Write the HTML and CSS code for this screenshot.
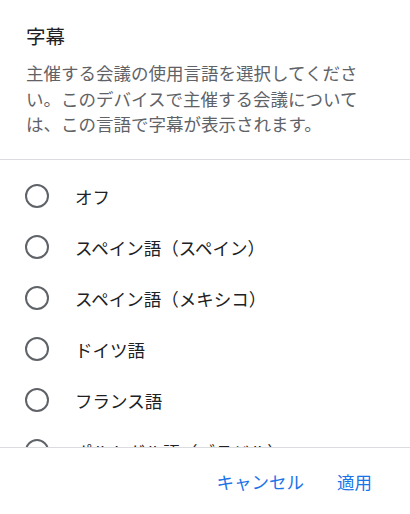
FILE: index.html
```html
<!DOCTYPE html>
<html lang="ja">
<head>
<meta charset="utf-8">
<link rel="stylesheet" href="styles.css">
</head>
<body>
<div class="dialog">
  <header class="head">
    <h1 class="title">字幕</h1>
    <p class="desc">主催する会議の使用言語を選択してください。このデバイスで主催する会議については、この言語で字幕が表示されます。</p>
  </header>
  <ul class="list">
    <li class="item"><span class="radio"></span><span class="label">オフ</span></li>
    <li class="item"><span class="radio"></span><span class="label">スペイン語（スペイン）</span></li>
    <li class="item"><span class="radio"></span><span class="label">スペイン語（メキシコ）</span></li>
    <li class="item"><span class="radio"></span><span class="label">ドイツ語</span></li>
    <li class="item"><span class="radio"></span><span class="label">フランス語</span></li>
    <li class="item"><span class="radio"></span><span class="label">ポルトガル語（ブラジル）</span></li>
  </ul>
  <footer class="foot">
    <button class="btn">キャンセル</button>
    <button class="btn">適用</button>
  </footer>
</div>
</body>
</html>
```

FILE: styles.css
```css
html, body {
  margin: 0;
  padding: 0;
  background: #ffffff;
}
body {
  font-family: "Noto Sans CJK JP", "Noto Sans", sans-serif;
}
.dialog {
  width: 410px;
  height: 514px;
  display: flex;
  flex-direction: column;
  overflow: hidden;
}
.head {
  padding: 23px 44px 22px 26px;
  border-bottom: 1px solid #dadce0;
}
.title {
  margin: 0;
  font-size: 19.5px;
  font-weight: 400;
  line-height: 26px;
  color: #202124;
}
.desc {
  margin: 11px 0 0;
  font-size: 17.5px;
  line-height: 25.5px;
  color: #5f6368;
}
.list {
  list-style: none;
  margin: 0;
  padding: 11px 0 0;
  flex: 1;
  overflow: hidden;
}
.item {
  height: 51px;
  display: flex;
  align-items: center;
  padding-left: 25px;
  gap: 26px;
}
.radio {
  width: 24px;
  height: 24px;
  box-sizing: border-box;
  border: 2px solid #5f6368;
  border-radius: 50%;
  flex: none;
}
.label {
  font-size: 17.5px;
  color: #202124;
}
.foot {
  height: 66px;
  border-top: 1px solid #dadce0;
  display: flex;
  justify-content: flex-end;
  align-items: center;
  gap: 17px;
  padding-right: 30px;
  flex: none;
}
.btn {
  background: none;
  border: none;
  padding: 6px 8px;
  margin: 0;
  font-family: inherit;
  font-size: 17.5px;
  color: #1a73e8;
}
```
